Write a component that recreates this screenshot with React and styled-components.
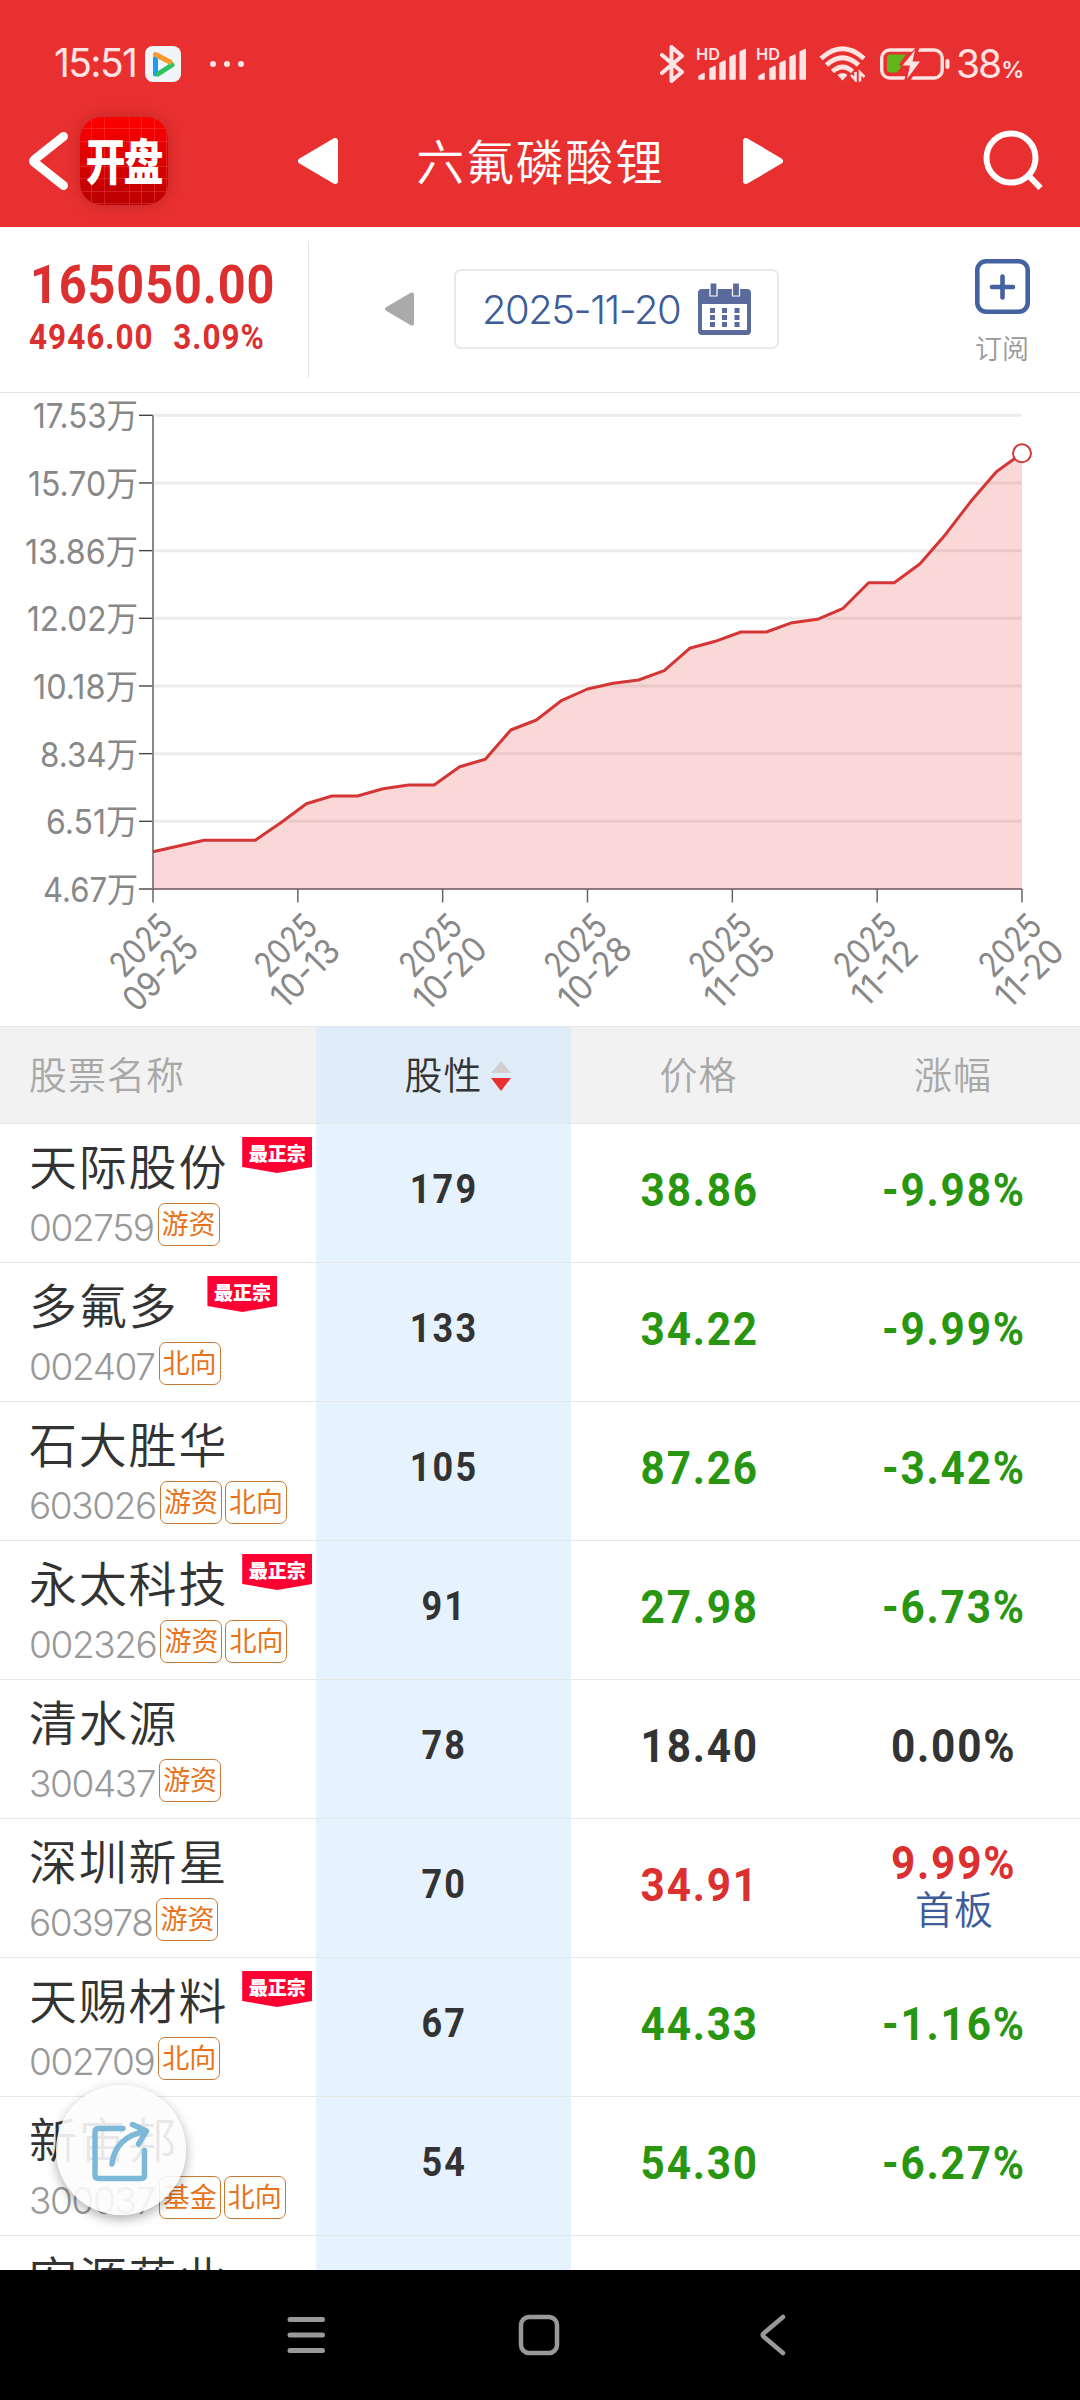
import React from 'react';
import styled, { createGlobalStyle } from 'styled-components';

const CJK = "'Noto Sans CJK SC', sans-serif";
const UI = `Inter, ${CJK}`;
const DIN = "Roboto, 'Liberation Sans', sans-serif";

const GlobalStyle = createGlobalStyle`
  * { box-sizing: border-box; }
  body { margin: 0; background: #fff; font-family: ${UI}; color: #333; }
  svg { display: block; flex: none; }
`;

const Screen = styled.div`
  position: relative;
  display: flex;
  flex-direction: column;
  width: 1080px;
  height: 2400px;
  overflow: hidden;
  background: #fff;
  white-space: nowrap;
`;

/* ---------- top ---------- */
const Header = styled.header`
  flex: none;
  height: 227px;
  background: #e83030;
  color: #fff;
`;

const StatusBar = styled.div`
  display: flex;
  justify-content: space-between;
  height: 100px;
  padding: 27px 61px 0 54px;
  color: #ffe4e4;
`;

const StatusGroup = styled.div`
  display: flex;
  align-items: center;
  height: 73px;
  gap: ${(p) => p.$gap || 0}px;
`;

const Clock = styled.span`
  width: 91px;
  padding-bottom: 2px;
  font-size: 39px;
  font-weight: 400;
  letter-spacing: -1.6px;
`;

const Battery = styled.span`
  width: 65px;
  margin: 0 -2px 0 6px;
  padding-bottom: 1px;
  font-size: 39px;
  letter-spacing: -2px;
  small { font-size: 23px; font-weight: 600; margin-left: 1px; }
`;

const BatteryGroup = styled(StatusGroup)`
  margin-left: 14px;
`;

const TitleBar = styled.div`
  display: flex;
  align-items: center;
  height: 122px;
  padding: 0 36px 0 28px;
`;

const AppLogo = styled.div`
  display: flex;
  align-items: center;
  justify-content: center;
  width: 88px;
  height: 88px;
  margin-left: 11px;
  border-radius: 22px;
  background:
    repeating-linear-gradient(90deg, transparent 0 11.5px, rgba(255,120,120,.26) 11.5px 12.5px),
    repeating-linear-gradient(180deg, transparent 0 11.5px, rgba(255,120,120,.26) 11.5px 12.5px),
    linear-gradient(#ff0000, #b80000);
  box-shadow: 0 0 14px rgba(120, 20, 20, .35);
  span {
    margin: -5px 0 0 -1px;
    font: 900 40px ${CJK};
    letter-spacing: -2px;
    transform: scaleY(1.22);
  }
`;

const Pager = styled.div`
  display: flex;
  align-items: center;
  justify-content: space-between;
  width: 485px;
  margin: 0 auto 0 130px;
`;

const Title = styled.h1`
  margin: -5px 0 0;
  font: 350 48px ${CJK};
  letter-spacing: 1.7px;
`;

/* ---------- quote strip ---------- */
const Quote = styled.section`
  display: flex;
  flex: none;
  height: 166px;
  border-bottom: 1px solid #e4e4e4;
`;

const QuoteFigures = styled.div`
  width: 309px;
  height: 137px;
  margin-top: 14px;
  padding: 17px 0 0 30px;
  border-right: 1px solid #e4e4e4;
  color: #dc2f2f;
  font-family: ${DIN};
  font-weight: 700;
  & > div { transform: scaleX(.9); transform-origin: left; }
`;

const BigPrice = styled.div`
  font-size: 54px;
  line-height: 54px;
  letter-spacing: 1px;
`;

const Delta = styled.div`
  display: flex;
  gap: 22px;
  margin: 8px 0 0 -1px;
  font-size: 35px;
  line-height: 36px;
  letter-spacing: 1.1px;
`;

const DatePicker = styled.div`
  display: flex;
  align-items: center;
  height: 80px;
  width: 325px;
  margin: 42px 0 0 40px;
  padding-left: 26px;
  border: 2px solid #e9e9e9;
  border-radius: 7px;
  color: #3d5c98;
  font-size: 40px;
  font-weight: 350;
  span { width: 216px; letter-spacing: -1.5px; }
`;

const PrevDay = styled.div`
  margin: 63px 0 0 76px;
`;

const Subscribe = styled.div`
  display: flex;
  flex-direction: column;
  align-items: center;
  width: 60px;
  margin: 32px 48px 0 auto;
  color: #999;
  font: 350 27px/32px ${CJK};
  span { margin-top: 18px; }
`;

/* ---------- chart ---------- */
const ChartArea = styled.section`
  flex: none;
  height: 633px;
  text { fill: #888; font-family: ${UI}; font-weight: 380; }
`;

/* ---------- table ---------- */
const cols = '316px 255px 255px 254px';

const TableHead = styled.div`
  display: grid;
  grid-template-columns: ${cols};
  flex: none;
  height: 98px;
  border-top: 1px solid #e8e8e8;
  border-bottom: 1px solid #e6e6e6;
  background: #f2f2f2;
  color: #a8a8a8;
  font: 350 38px ${CJK};
  letter-spacing: 1px;
`;

const HeadCell = styled.div`
  display: flex;
  align-items: center;
  justify-content: ${(p) => (p.$first ? 'flex-start' : 'center')};
  gap: 8px;
  padding: 0 0 5px ${(p) => (p.$first ? 29 : 0)}px;
  svg { margin-top: 7px; }
  ${(p) => p.$active && 'background:#e0ecf8;color:#333;padding-left:28px;'}
`;

const Rows = styled.div`
  flex: 1;
  min-height: 0;
  overflow: hidden;
`;

const Row = styled.div`
  display: grid;
  grid-template-columns: ${cols};
  height: 139px;
`;

const Cell = styled.div`
  display: flex;
  flex-direction: column;
  align-items: center;
  justify-content: center;
  border-bottom: 1px solid #e8e8e8;
  padding: 0 0 6px 2px;
  background: ${(p) => (p.$active ? '#e6f3ff' : 'transparent')};
`;

const NameCell = styled.div`
  padding: 8px 0 0 29px;
  border-bottom: 1px solid #e8e8e8;
`;

const NameLine = styled.div`
  display: flex;
  height: 70px;
  font: 350 48px/64px ${CJK};
  letter-spacing: 1.8px;
`;

const CodeLine = styled.div`
  display: flex;
  align-items: center;
  gap: 3px;
  height: 44px;
  color: #999;
  font-size: 37px;
  font-weight: 350;
  em { font-style: normal; letter-spacing: -1.4px; padding-top: 6px; margin-right: 1px; }
`;

const Tag = styled.span`
  width: 62px;
  height: 43px;
  border: 1.5px solid #cc7a33;
  border-radius: 7px;
  color: #e8731a;
  font: 400 27px/37px ${CJK};
  text-align: center;
`;

const Badge = styled.span`
  width: 70px;
  height: 36px;
  margin: 5px 0 0 ${(p) => p.$gap}px;
  background: #ff0033;
  clip-path: polygon(0 0, 100% 0, 100% 83%, 50% 100%, 0 83%);
  color: #fff;
  font: 900 19px/31px ${CJK};
  letter-spacing: 0;
  text-align: center;
`;

const tone = { up: '#dc2f2f', down: '#289611', flat: '#333' };

const Figure = styled.span`
  color: ${(p) => tone[p.$tone]};
  font: 700 ${(p) => (p.$small ? 40 : 47)}px/46px ${DIN};
  letter-spacing: ${(p) => (p.$small ? 2.4 : 2)}px;
  transform: scaleX(.9);
`;

const Note = styled.span`
  color: #3d5c98;
  font: 350 39px/46px ${CJK};
  margin-top: -2px;
`;

/* ---------- overlays ---------- */
const ShareButton = styled.button`
  position: absolute;
  left: 56px;
  top: 2085px;
  display: flex;
  align-items: center;
  justify-content: center;
  width: 130px;
  height: 130px;
  padding: 0;
  border: 0;
  border-radius: 50%;
  background: rgba(252, 252, 252, .9);
  box-shadow: 0 4px 12px rgba(0, 0, 0, .32);
`;

const NavBar = styled.nav`
  display: flex;
  flex: none;
  align-items: center;
  justify-content: space-between;
  height: 130px;
  padding: 0 293px 0 286px;
  background: #000;
`;

const HomeIcon = styled.svg`
  margin-right: 8px;
`;

const Triangle = ({ w, h, color, right }) => (
  <svg width={w} height={h} viewBox="0 0 40 46">
    <path
      d={right ? 'M3 3V43L37 23Z' : 'M37 3V43L3 23Z'}
      fill={color} stroke={color} strokeWidth="6" strokeLinejoin="round"
    />
  </svg>
);

const Bluetooth = () => (
  <svg width="24" height="40" viewBox="0 0 24 40">
    <path d="M2 11 22 28 11.500 37V3L22 12 2 29" fill="none" stroke="currentColor" strokeWidth="4" strokeLinejoin="round" strokeLinecap="round" />
  </svg>
);

const SignalText = styled.text`
  font: 600 16.5px ${UI};
  fill: currentColor;
`;

const Signal = () => (
  <svg width="51" height="46" viewBox="0 -5 51 46">
    <SignalText x="0" y="14" textLength="24" lengthAdjust="spacingAndGlyphs">HD</SignalText>
    <path
      d="M3 30.500 8 27.500V33H3ZM14 23 19 20.500V33H14ZM24 17.500 29 15V33H24ZM34 11.500 39 9V33H34ZM44.200 6 49.200 3.500V33H44.200Z"
      fill="currentColor" stroke="currentColor" strokeWidth="1.500" strokeLinejoin="round"
    />
  </svg>
);

const Wifi = () => (
  <svg width="47" height="36" viewBox="0 0 47 36">
    <g fill="none" stroke="currentColor" strokeWidth="4.800">
      <path d="M2 12.500Q23.500-7 45 12.500" />
      <path d="M7.500 19Q23.500 4.500 39.500 19" />
      <path d="M13.500 25.500Q23.500 16.500 33.500 25.500" />
    </g>
    <path d="M18.500 29Q23.500 25 28.500 29L23.500 34.500Z" fill="currentColor" />
    <path d="M32 29 36.500 34V26M45.500 31 41 26.500V35.500" fill="none" stroke="currentColor" strokeWidth="2.600" />
  </svg>
);

const BatteryIcon = () => (
  <svg width="70" height="34" viewBox="0 0 70 34">
    <rect x="1.700" y="3" width="60.500" height="28" rx="8" fill="none" stroke="currentColor" strokeWidth="3.400" />
    <rect x="65.500" y="12" width="4" height="10" rx="2" fill="currentColor" />
    <path d="M10 7.500H26L18.500 18H23L17 25.500H10Q7 25.500 7 22.500V10.500Q7 7.500 10 7.500Z" fill="#62b51c" />
    <path d="M36 0 20 20H28L24 34H30L43 14H34L40 0Z" fill="#e83030" />
    <path d="M35 3 22.500 18.500H30L27 32 40 14.500H32.500Z" fill="currentColor" />
  </svg>
);

const MediaIcon = () => (
  <svg width="36" height="36" viewBox="0 0 36 36">
    <rect width="36" height="36" rx="8" fill="#f1f5f8" />
    <g fill="none" strokeWidth="5" strokeLinecap="round">
      <path d="M10.500 12V28" stroke="#1a9df5" />
      <path d="M13 28 27 19" stroke="#2cc45f" />
      <path d="M10.500 8.500 25 16" stroke="#f79a2a" />
    </g>
  </svg>
);

const Dots = styled.div`
  display: flex;
  gap: 8px;
  margin-left: 29px;
  i { width: 6px; height: 6px; border-radius: 50%; background: currentColor; }
`;

const CalendarIcon = () => (
  <svg width="53" height="52" viewBox="0 0 53 52">
    <path d="M4 6H49Q53 6 53 10V48Q53 52 49 52H4Q0 52 0 48V10Q0 6 4 6ZM4 21V47H49V21Z" fill="#5b6a9c" fillRule="evenodd" />
    <path d="M12 0H19V13H12ZM34.500 0H41.500V13H34.500Z" fill="#5b6a9c" stroke="#fff" strokeWidth="1.200" />
    <path d="M12 25h5v5h-5zM24 25h5v5h-5zM36.500 25h5v5h-5zM12 32h5v5h-5zM24 32h5v5h-5zM36.500 32h5v5h-5zM12 39h5v5h-5zM24 39h5v5h-5zM36.500 39h5v5h-5z" fill="#5b6a9c" />
  </svg>
);

const series = [458.7, 453, 447.3, 447.3, 447.3, 429.7, 410.7, 403, 403, 395.7, 392, 392, 373.7, 366.3, 337, 327,
  307.3, 296, 290.3, 287, 277.7, 255.3, 248.3, 239, 239, 229.7, 226.3, 215.3, 189.7, 189.7, 171, 141.7, 108.3, 78.7, 60.3];
const yLabels = ['17.53', '15.70', '13.86', '12.02', '10.18', '8.34', '6.51', '4.67'];
const yWidths = [105, 110, 113, 111, 105, 98, 92, 95];
const xLabels = ['09-25', '10-13', '10-20', '10-28', '11-05', '11-12', '11-20'];
const xWidths = [90, 81, 87, 87, 83, 77, 80];
const X0 = 153, X1 = 1022, TOP = 22.3, BOTTOM = 496;
const step = (BOTTOM - TOP) / 7;

const Chart = () => {
  const pts = series.map((y, i) => `${(X0 + (i * (X1 - X0)) / 34).toFixed(1)},${y}`).join(' ');
  return (
    <ChartArea>
      <svg width="1080" height="633" viewBox="0 0 1080 633">
        {yLabels.map((t, i) => {
          const y = TOP + i * step;
          return (
            <g key={t}>
              {i < 7 && <path d={`M${X0} ${y}H${X1}`} stroke="#ececec" strokeWidth="3" />}
              <path d={`M139 ${y}H${X0}`} stroke="#444" strokeWidth="1.400" />
              <text x={138 - yWidths[i]} y={y + 13} fontSize="34" textLength={yWidths[i]} lengthAdjust="spacingAndGlyphs">
                {`${t}万`}
              </text>
            </g>
          );
        })}
        <polygon points={`${X0},${BOTTOM} ${pts} ${X1},${BOTTOM}`} fill="rgba(232,48,48,.19)" />
        <path d={`M${X0} ${TOP}V${BOTTOM}`} stroke="#888" strokeWidth="2" />
        <path d={`M${X0} ${BOTTOM}H${X1}`} stroke="#6b5558" strokeWidth="1.600" />
        <polyline points={pts} fill="none" stroke="#d43636" strokeWidth="3" strokeLinejoin="round" />
        <circle cx={X1} cy="60.300" r="9" fill="#fff" stroke="#cf3a3a" strokeWidth="2" />
        {xLabels.map((t, i) => {
          const x = X0 + (i * (X1 - X0)) / 6;
          return (
            <g key={t}>
              <path d={`M${x} ${BOTTOM}V509.500`} stroke="#666" strokeWidth="1.500" />
              <g transform={`translate(${x - 12.500} 552) rotate(-45)`}>
                <text x="-36" y="12.500" fontSize="34.500" textLength="72" lengthAdjust="spacingAndGlyphs">2025</text>
              </g>
              <g transform={`translate(${x + 7} 580) rotate(-45)`}>
                <text x={-xWidths[i] / 2} y="12.500" fontSize="34.500" textLength={xWidths[i]} lengthAdjust="spacingAndGlyphs">{t}</text>
              </g>
            </g>
          );
        })}
      </svg>
    </ChartArea>
  );
};

const stocks = [
  { name: '天际股份', code: '002759', tags: ['游资'], badge: 14, score: 179, price: '38.86', pct: '-9.98%', t: 'down' },
  { name: '多氟多', code: '002407', tags: ['北向'], badge: 29, score: 133, price: '34.22', pct: '-9.99%', t: 'down' },
  { name: '石大胜华', code: '603026', tags: ['游资', '北向'], score: 105, price: '87.26', pct: '-3.42%', t: 'down' },
  { name: '永太科技', code: '002326', tags: ['游资', '北向'], badge: 14, score: 91, price: '27.98', pct: '-6.73%', t: 'down' },
  { name: '清水源', code: '300437', tags: ['游资'], score: 78, price: '18.40', pct: '0.00%', t: 'flat' },
  { name: '深圳新星', code: '603978', tags: ['游资'], score: 70, price: '34.91', pct: '9.99%', t: 'up', note: '首板' },
  { name: '天赐材料', code: '002709', tags: ['北向'], badge: 14, score: 67, price: '44.33', pct: '-1.16%', t: 'down' },
  { name: '新宙邦', code: '300037', tags: ['基金', '北向'], score: 54, price: '54.30', pct: '-6.27%', t: 'down' },
  { name: '宏源药业', tags: [], t: 'flat' },
];

export default function App() {
  return (
    <Screen>
      <GlobalStyle />
      <Header>
        <StatusBar>
          <StatusGroup>
            <Clock>15:51</Clock>
            <MediaIcon />
            <Dots><i /><i /><i /></Dots>
          </StatusGroup>
          <StatusGroup>
            <StatusGroup $gap={12}>
              <Bluetooth />
              <StatusGroup $gap={9}><Signal /><Signal /></StatusGroup>
              <Wifi />
            </StatusGroup>
            <BatteryGroup>
              <BatteryIcon />
              <Battery>38<small>%</small></Battery>
            </BatteryGroup>
          </StatusGroup>
        </StatusBar>
        <TitleBar>
          <svg width="41" height="60" viewBox="0 0 41 60">
            <path d="M35.500 5.500 6.500 28.500Q4.500 30 6.500 31.500L35.500 54.500" fill="none" stroke="#fff" strokeWidth="9" strokeLinecap="round" strokeLinejoin="round" />
          </svg>
          <AppLogo><span>开盘</span></AppLogo>
          <Pager>
            <Triangle w={40} h={46} color="#fff" />
            <Title>六氟磷酸锂</Title>
            <Triangle w={40} h={46} color="#fff" right />
          </Pager>
          <svg width="62" height="62" viewBox="0 0 62 62">
            <circle cx="29" cy="28" r="24.500" fill="none" stroke="#fff" strokeWidth="6" />
            <path d="M47 46 58.500 58" stroke="#fff" strokeWidth="6" />
          </svg>
        </TitleBar>
      </Header>

      <Quote>
        <QuoteFigures>
          <BigPrice>165050.00</BigPrice>
          <Delta><span>4946.00</span><span>3.09%</span></Delta>
        </QuoteFigures>
        <PrevDay><Triangle w={29} h={38} color="#aaa" /></PrevDay>
        <DatePicker>
          <span>2025-11-20</span>
          <CalendarIcon />
        </DatePicker>
        <Subscribe>
          <svg width="55" height="55" viewBox="0 0 55 55" fill="none" stroke="#4462a0">
            <rect x="2.300" y="2.300" width="50.400" height="50.400" rx="9" strokeWidth="4.600" />
            <path d="M27.500 17.500V38.500M17 28H38" strokeWidth="4.600" strokeLinecap="round" />
          </svg>
          <span>订阅</span>
        </Subscribe>
      </Quote>

      <Chart />

      <TableHead>
        <HeadCell $first>股票名称</HeadCell>
        <HeadCell $active>
          股性
          <svg width="20" height="30" viewBox="0 0 20 30">
            <path d="M10 0 20 12H0Z" fill="#d0d0d0" />
            <path d="M0 17H20L10 30Z" fill="#e83030" />
          </svg>
        </HeadCell>
        <HeadCell>价格</HeadCell>
        <HeadCell>涨幅</HeadCell>
      </TableHead>
      <Rows>
        {stocks.map((s) => (
          <Row key={s.name}>
            <NameCell>
              <NameLine>
                {s.name}
                {s.badge && <Badge $gap={s.badge}>最正宗</Badge>}
              </NameLine>
              <CodeLine>
                <em>{s.code}</em>
                {s.tags.map((t) => <Tag key={t}>{t}</Tag>)}
              </CodeLine>
            </NameCell>
            <Cell $active><Figure $small $tone="flat">{s.score}</Figure></Cell>
            <Cell><Figure $tone={s.t}>{s.price}</Figure></Cell>
            <Cell>
              <Figure $tone={s.t}>{s.pct}</Figure>
              {s.note && <Note>{s.note}</Note>}
            </Cell>
          </Row>
        ))}
      </Rows>

      <NavBar>
        <svg width="40" height="40" viewBox="0 0 40 40" stroke="#999" strokeWidth="5" strokeLinecap="round">
          <path d="M4 4.500H36.500M4 20H36.500M4 35.500H36.500" />
        </svg>
        <HomeIcon width="42" height="42" viewBox="0 0 42 42" fill="none" stroke="#999" strokeWidth="4.500">
          <rect x="3" y="3" width="36" height="36" rx="8" />
        </HomeIcon>
        <svg width="28" height="44" viewBox="0 0 28 44" fill="none" stroke="#999" strokeWidth="4.500" strokeLinecap="round">
          <path d="M24 4 4.500 20.500Q3 22 4.500 23.500L24 40" />
        </svg>
      </NavBar>

      <ShareButton>
        <svg width="60" height="64" viewBox="0 0 60 64" fill="none" stroke="#7db8d8" strokeWidth="5.500" strokeLinecap="round">
          <path d="M32 10.500H7.500Q4 10.500 4 14V57Q4 60.500 7.500 60.500H50Q53.500 60.500 53.500 57V32.500" />
          <path d="M21 46Q24 19 55 13M41.500 6.500 55.500 13 47.500 26" strokeLinejoin="round" />
        </svg>
      </ShareButton>
    </Screen>
  );
}
